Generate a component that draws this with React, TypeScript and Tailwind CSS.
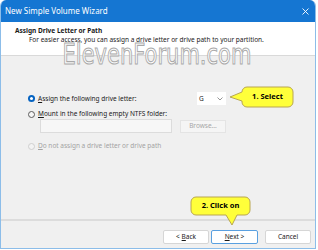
import React from 'react';

function Radio({ state }: { state: 'on' | 'off' | 'disabled' }) {
  if (state === 'on') {
    return (
      <span className="w-[7px] h-[7px] rounded-full bg-[#0563c1] flex items-center justify-center shrink-0">
        <span className="w-[3px] h-[3px] rounded-full bg-white" />
      </span>
    );
  }
  return (
    <span
      className={
        state === 'off'
          ? 'w-[7px] h-[7px] rounded-full border border-[#5c5c5c] bg-[#f6f6f6] shrink-0'
          : 'w-[7px] h-[7px] rounded-full border border-[#cfcfcf] bg-[#f3f3f3] shrink-0'
      }
    />
  );
}

function Callout1() {
  return (
    <div className="absolute left-[229px] top-[86px] w-[66px] h-[23px]">
      <svg width="66" height="23" className="absolute inset-0">
        <path
          d="M18 1 H59 A5 5 0 0 1 64 6 V16 A5 5 0 0 1 59 21 H18 A5 5 0 0 1 13 16 V15 L1 11 L13 6 A5 5 0 0 1 18 1 Z"
          fill="#ffff3a"
          stroke="#b9a651"
          strokeWidth="1"
        />
      </svg>
      <div className="absolute left-[13px] top-[1px] w-[51px] h-[20px] flex items-center justify-center text-[7.5px] font-bold text-black">
        1. Select
      </div>
    </div>
  );
}

function Callout2() {
  return (
    <div className="absolute left-[190px] top-[196px] w-[62px] h-[31px]">
      <svg width="62" height="31" className="absolute inset-0">
        <path
          d="M6 1 H55 A5 5 0 0 1 60 6 V14 A5 5 0 0 1 55 19 H47 L42 29 L36 19 H6 A5 5 0 0 1 1 14 V6 A5 5 0 0 1 6 1 Z"
          fill="#ffff3a"
          stroke="#b9a651"
          strokeWidth="1"
        />
      </svg>
      <div className="absolute left-[1px] top-[1px] w-[59px] h-[18px] flex items-center justify-center text-[7.5px] font-bold text-black">
        2. Click on
      </div>
    </div>
  );
}

export default function App() {
  return (
    <div className="relative w-[318px] h-[250px] bg-white overflow-hidden font-['Noto_Sans',sans-serif] text-[#1a1a1a]">
      <div className="w-[316px] h-[249px] rounded-t-[6px] overflow-hidden border-x border-b border-[#8cbde9] flex flex-col">
        {/* title bar */}
        <div className="h-[22px] bg-[#1576d2] flex items-center justify-between pl-[4px] pr-[6px] text-white text-[8px]">
          <span>New Simple Volume Wizard</span>
          <svg width="7" height="7" viewBox="0 0 7 7">
            <path d="M0.5 0.5 L6.5 6.5 M6.5 0.5 L0.5 6.5" stroke="white" strokeWidth="0.9" />
          </svg>
        </div>

        {/* header */}
        <div className="h-[34px] bg-white border-b border-[#d9d9d9] pl-[14px] pt-[5px] text-[6.5px] leading-[8px]">
          <div className="font-bold">Assign Drive Letter or Path</div>
          <div className="ml-[14px] mt-[1px]">
            For easier access, you can assign a drive letter or drive path to your partition.
          </div>
        </div>

        {/* body */}
        <div className="h-[163px] bg-[#f0f0f0] pl-[27px] pt-[36px] text-[6.5px]">
          <div className="flex items-center h-[13px]">
            <div className="w-[169px] flex items-center gap-[3px]">
              <Radio state="on" />
              <span>
                <span className="underline">A</span>ssign the following drive letter:
              </span>
            </div>
            <div className="w-[29px] h-[13px] bg-white flex items-center justify-between pl-[2px] pr-[3px]">
              <span>G</span>
              <svg width="6" height="4" viewBox="0 0 6 4">
                <path d="M0.5 0.5 L3 3 L5.5 0.5" stroke="#7a7a7a" strokeWidth="0.8" fill="none" />
              </svg>
            </div>
          </div>
          <div className="flex items-center h-[10px] mt-[4px] gap-[3px]">
            <Radio state="off" />
            <span>
              <span className="underline">M</span>ount in the following empty NTFS folder:
            </span>
          </div>
          <div className="flex items-center ml-[12px] gap-[8px]">
            <div className="w-[132px] h-[14px] bg-[#f7f7f7] border border-[#dcdcdc]" />
            <div className="w-[46px] h-[13px] bg-[#f5f5f5] border border-[#e4e4e4] flex items-center justify-center text-[#a6a6a6]">
              Browse...
            </div>
          </div>
          <div className="flex items-center h-[10px] mt-[8px] gap-[3px] text-[#a3a3a3]">
            <Radio state="disabled" />
            <span>
              <span className="underline">D</span>o not assign a drive letter or drive path
            </span>
          </div>
        </div>

        {/* footer */}
        <div className="flex-1 bg-[#f0f0f0] border-t-2 border-[#dcdcdc] flex justify-end items-start pt-[9px] pr-[4px] text-[6.5px]">
          <div className="w-[46px] h-[14px] bg-white border border-[#d6d6d6] rounded-[2px] flex items-center justify-center">
            &lt; <span className="underline ml-[2px]">B</span>ack
          </div>
          <div className="w-[47px] h-[14px] bg-white border border-[#5aa0e0] rounded-[2px] ml-[2px] flex items-center justify-center">
            <span className="underline">N</span>ext &gt;
          </div>
          <div className="w-[46px] h-[14px] bg-white border border-[#d6d6d6] rounded-[2px] ml-[7px] flex items-center justify-center">
            Cancel
          </div>
        </div>
      </div>

      {/* watermark */}
      <div className="absolute left-[62px] top-[44px] w-[190px] text-center font-['DejaVu_Sans',sans-serif] text-[21px] leading-[16px] text-white [-webkit-text-stroke:0.8px_#a9a9a9] scale-y-[1.35] origin-top">
        ElevenForum.com
      </div>

      <Callout1 />
      <Callout2 />
    </div>
  );
}
